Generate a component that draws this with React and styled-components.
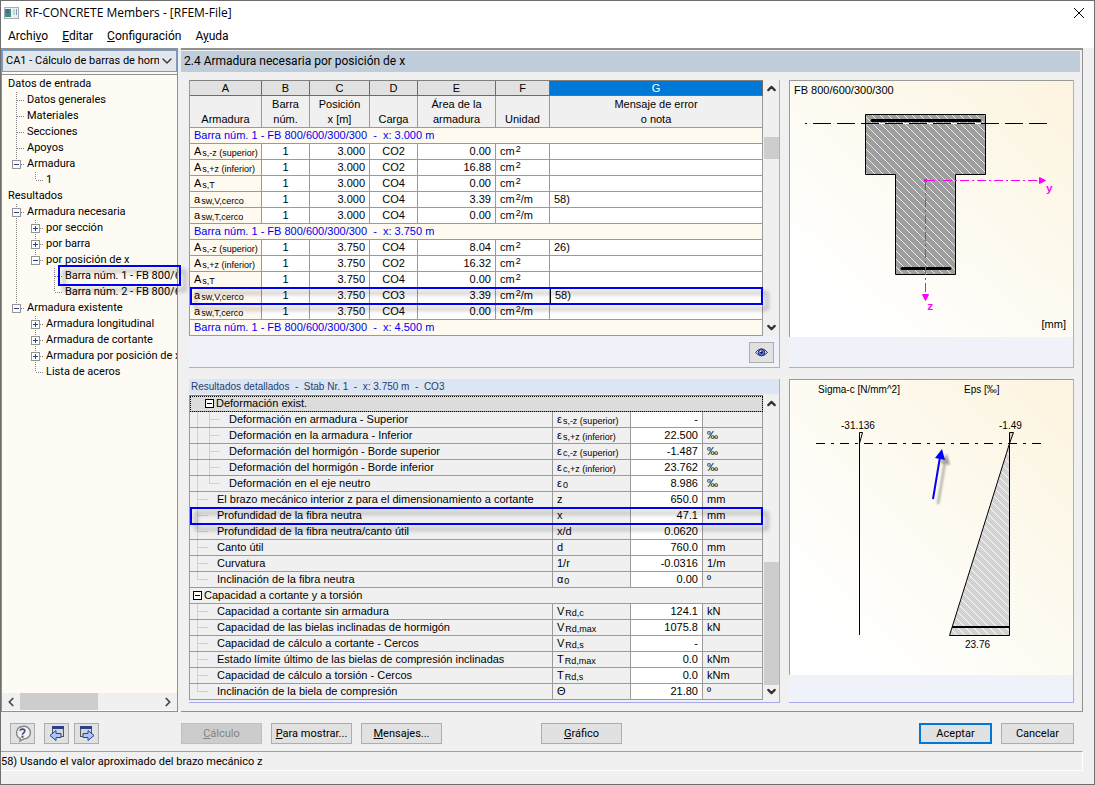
import React, { useState } from "react";
import styled, { createGlobalStyle, css } from "styled-components";
import { ChevronDown, ChevronLeft, ChevronRight, ChevronUp } from "lucide-react";

const GlobalStyle = createGlobalStyle`
  * {
    box-sizing: border-box;
  }

  body {
    margin: 0;
    background: #f0f0f0;
    color: #000;
    font-family: Roboto, "Liberation Sans", sans-serif;
    font-size: 11px;
    line-height: 16px;
  }

  button, select {
    font: inherit;
    color: inherit;
    padding: 0;
  }
`;

const Window = styled.div`
  min-height: 100vh;
  display: flex;
  flex-direction: column;
  background: #f0f0f0;
  border: 1px solid #6e6e6e;
`;

const TitleBar = styled.header`
  display: flex;
  align-items: center;
  gap: 6px;
  height: 24px;
  padding: 0 8px 0 3px;
  background: #fff;
`;

const Title = styled.h1`
  flex: 1;
  margin: 0;
  font-family: "Open Sans", sans-serif;
  font-size: 12px;
  font-weight: 400;
`;

const CloseButton = styled.button`
  display: flex;
  border: none;
  background: none;
`;

const MenuBar = styled.nav`
  display: flex;
  gap: 14px;
  height: 23px;
  padding: 0 7px;
  background: #fff;
  font-size: 12px;
  line-height: 22px;
`;

const MenuLink = styled.a`
  color: #000;
  text-decoration: none;
`;

const Main = styled.main`
  flex: 1;
  display: grid;
  grid-template-columns: 177px minmax(0, 1fr);
  gap: 3px;
  padding-right: 11px;
`;

// Navegador
const Sidebar = styled.aside`
  position: relative;
  z-index: 1;
  display: flex;
  flex-direction: column;
  min-width: 0;
  border: solid #909090;
  border-width: 2px 1px 1px 1px;
  background: #fdfbf3;
`;

const CaseSelect = styled.div`
  display: flex;
  align-items: center;
  height: 22px;
  padding: 0 1px 0 3px;
  border: 1px solid #7a9cc0;
  background: #e3e7ec;

  select {
    flex: 1;
    min-width: 0;
    appearance: none;
    border: none;
    background: none;
    outline: none;
    text-overflow: clip;
  }
`;

const Tree = styled.ul`
  flex: 1;
  list-style: none;
  margin: 2px 0 0;
  padding: 1px 0 0 6px;
  border-top: 1px solid #909090;
`;

const TreeRow = styled.li`
  position: relative;
  display: flex;
  height: 16px;
  white-space: nowrap;
`;

const TreeLabel = styled.a`
  flex: 1;
  min-width: 0;
  overflow: hidden;
  color: #000;
  text-decoration: none;
`;

const HScroll = styled.div`
  display: flex;
  align-items: center;
  justify-content: space-between;
  height: 17px;
  margin-bottom: 1px;
  padding: 0 2px;
  background: #f0f0f0;
`;

const HTrack = styled.div`
  flex: 1;
  height: 100%;
  margin: 0 2px;
`;

const HThumb = styled.div`
  width: 56%;
  height: 100%;
  background: #cdcdcd;
`;

const Mark = styled.div`
  position: absolute;
  inset: ${(p) => p.$inset};
  border: 2px solid #0000f0;
  filter: drop-shadow(5px 5px 2px rgba(0, 0, 0, 0.35));
  pointer-events: none;
`;

// Zona derecha
const Content = styled.section`
  min-width: 0;
  border: solid #909090;
  border-width: 2px 1px 1px 0;
`;

const ContentTitle = styled.h2`
  height: 21px;
  margin: 1px 2px 8px 0;
  padding: 0 3px;
  background: #bfcddb;
  font-size: 12px;
  font-weight: 400;
  line-height: 21px;
`;

const Panels = styled.div`
  display: grid;
  grid-template-columns: minmax(0, 1fr) 285px;
  column-gap: 9px;
  row-gap: 11px;
  padding: 0 8px 8px;
`;

const Panel = styled.div`
  display: flex;
  flex-direction: column;
  min-width: 0;
  border: solid #a9a9ee;
  border-width: 0 1px 1px 0;
`;

const PanelTitle = styled.h3`
  height: 15px;
  margin: 0 0 1px;
  padding: 0 2px;
  background: #dbe5f3;
  color: #1f3f6b;
  font-family: "Liberation Sans", sans-serif;
  font-size: 10px;
  font-weight: 400;
  line-height: 15px;
  white-space: pre;
`;

const PanelFooter = styled.div`
  flex: 1;
  display: flex;
  align-items: center;
  justify-content: flex-end;
  min-height: ${(p) => p.$height}px;
  padding: 2px 5px 0;
  background: #eff3f9;
`;

const TableArea = styled.div`
  display: flex;
`;

const VScroll = styled.div`
  display: flex;
  flex-direction: column;
  align-items: center;
  justify-content: space-between;
  width: 16px;
  padding: 2px 0 2px 1px;
  background: #f0f0f0;
`;

const VTrack = styled.div`
  flex: 1;
  display: flex;
  flex-direction: column;
  justify-content: ${(p) => (p.$atEnd ? "flex-end" : "flex-start")};
  width: 100%;
  padding-top: ${(p) => p.$offset || 0}px;
`;

const VThumb = styled.div`
  width: 100%;
  height: ${(p) => p.$size}px;
  background: #cdcdcd;
`;

const Table = styled.table`
  flex: 1;
  width: 100%;
  min-width: 0;
  table-layout: fixed;
  border-collapse: separate;
  border-spacing: 0;
  border-left: 1px solid #9a9a9a;
  border-top: 1px solid #808080;
  font-family: "Liberation Sans", sans-serif;
`;

const cell = css`
  height: 16px;
  padding: 0 4px;
  border: solid #9a9a9a;
  border-width: 0 1px 1px 0;
  line-height: 15px;
  font-weight: 400;
  white-space: nowrap;
  overflow: hidden;
`;

const Letter = styled.th`
  ${cell}
  height: 15px;
  border-color: #6b6b6b;
  background: ${(p) => (p.$active ? "#0078d7" : "#e1e1e1")};
  color: ${(p) => (p.$active ? "#fff" : "#000")};
  line-height: 14px;
`;

const Heading = styled.th`
  ${cell}
  height: 32px;
  background: #f0f0f0;
  vertical-align: bottom;
`;

const Cell = styled.td`
  ${cell}
  text-align: ${(p) => p.$align || "left"};
  background: ${(p) => p.$bg || "#fff"};
  ${(p) => p.$current && "border-left: 1px solid #000;"}
`;

const GroupCell = styled.td`
  ${cell}
  background: #fffaf0;
  color: #0000f0;
  white-space: pre;
`;

const MarkedRow = styled.tr`
  position: relative;
`;

const SectionCell = styled.td`
  ${cell}
  padding: 0 0 0 ${(p) => (p.$focused ? 14 : 2)}px;
  background: ${(p) => (p.$focused ? "#dcdcdc" : "#f0f0f0")};
  ${(p) =>
    p.$focused &&
    css`
      outline: 1px dotted #000;
      outline-offset: -1px;
    `}
`;

const DetailLabel = styled.div`
  display: flex;
  height: 15px;
`;

const LabelText = styled.span`
  margin-left: 11px;
`;

const Sub = styled.sub`
  margin-left: 1px;
  font-size: 9px;
  line-height: 9px;
  vertical-align: -1px;
`;

const Sup = styled.sup`
  margin-left: 1px;
  font-size: 9px;
  line-height: 9px;
  vertical-align: 3px;
`;

const Canvas = styled.div`
  display: flex;
  border: solid #9a9a9a;
  border-width: 1px 0 0 1px;
  background: linear-gradient(to top right, #fff 15%, #fdfaf0 55%, #fcf4df);
`;

const BlueArrow = styled.g`
  filter: drop-shadow(5px 5px 1px rgba(0, 0, 0, 0.35));
`;

// Barra inferior
const ButtonBar = styled.div`
  display: flex;
  align-items: center;
  gap: 9px;
  height: 39px;
  padding: 4px 20px 0 9px;
`;

const ToolButton = styled.button`
  display: flex;
  align-items: center;
  justify-content: center;
  width: 25px;
  height: 21px;
  border: 1px solid #adadad;
  background: #e1e1e1;
`;

const ToolPair = styled.div`
  display: flex;
  gap: 5px;
`;

const TextButton = styled.button`
  width: ${(p) => p.$width || 81}px;
  height: 21px;
  border: ${(p) => (p.$primary ? "2px solid #0078d7" : "1px solid #adadad")};
  background: #e1e1e1;

  &:disabled {
    border-color: #bfbfbf;
    background: #cccccc;
    color: #838383;
  }
`;

const Group = styled.div`
  display: flex;
  gap: 9px;
  margin-left: ${(p) => p.$left || 0}px;
`;

const Spacer = styled.div`
  flex: 1;
`;

const StatusBar = styled.footer`
  height: 20px;
  margin: 0 11px 13px 0;
  border: solid #fff;
  border-width: 1px 1px 1px 0;
  border-top-color: #a0a0a0;
  line-height: 19px;
`;

const treeItems = [
  { label: "Datos de entrada", guides: "" },
  { label: "Datos generales", guides: "t" },
  { label: "Materiales", guides: "t" },
  { label: "Secciones", guides: "t" },
  { label: "Apoyos", guides: "t" },
  { label: "Armadura", guides: "M" },
  { label: "1", guides: " e" },
  { label: "Resultados", guides: "" },
  { label: "Armadura necesaria", guides: "m" },
  { label: "por sección", guides: "|p" },
  { label: "por barra", guides: "|p" },
  { label: "por posición de x", guides: "|M" },
  { label: "Barra núm. 1 - FB 800/600/300/300", guides: "| t", marked: true },
  { label: "Barra núm. 2 - FB 800/600/300/300", guides: "| e" },
  { label: "Armadura existente", guides: "M" },
  { label: "Armadura longitudinal", guides: " p" },
  { label: "Armadura de cortante", guides: " p" },
  { label: "Armadura por posición de x", guides: " p" },
  { label: "Lista de aceros", guides: " e" },
];

const columns = [
  { letter: "A", title: "Armadura", width: 72 },
  { letter: "B", title: "Barra\nnúm.", width: 48 },
  { letter: "C", title: "Posición\nx [m]", width: 60 },
  { letter: "D", title: "Carga", width: 48 },
  { letter: "E", title: "Área de la\narmadura", width: 78 },
  { letter: "F", title: "Unidad", width: 54 },
  { letter: "G", title: "Mensaje de error\no nota" },
];

const rows = [
  { group: "Barra núm. 1 - FB 800/600/300/300  -  x: 3.000 m" },
  { sym: "A", sub: "s,-z (superior)", x: "3.000", co: "CO2", area: "0.00" },
  { sym: "A", sub: "s,+z (inferior)", x: "3.000", co: "CO2", area: "16.88" },
  { sym: "A", sub: "s,T", x: "3.000", co: "CO4", area: "0.00" },
  { sym: "a", sub: "sw,V,cerco", x: "3.000", co: "CO4", area: "3.39", perM: true, note: "58)" },
  { sym: "a", sub: "sw,T,cerco", x: "3.000", co: "CO4", area: "0.00", perM: true },
  { group: "Barra núm. 1 - FB 800/600/300/300  -  x: 3.750 m" },
  { sym: "A", sub: "s,-z (superior)", x: "3.750", co: "CO4", area: "8.04", note: "26)" },
  { sym: "A", sub: "s,+z (inferior)", x: "3.750", co: "CO2", area: "16.32" },
  { sym: "A", sub: "s,T", x: "3.750", co: "CO4", area: "0.00" },
  { sym: "a", sub: "sw,V,cerco", x: "3.750", co: "CO3", area: "3.39", perM: true, note: "58)", marked: true },
  { sym: "a", sub: "sw,T,cerco", x: "3.750", co: "CO4", area: "0.00", perM: true },
  { group: "Barra núm. 1 - FB 800/600/300/300  -  x: 4.500 m" },
];

const details = [
  { section: "Deformación exist.", focused: true },
  { label: "Deformación en armadura - Superior", guides: "|t", sym: "ε", sub: "s,-z (superior)", value: "-" },
  { label: "Deformación en la armadura - Inferior", guides: "|t", sym: "ε", sub: "s,+z (inferior)", value: "22.500", unit: "‰" },
  { label: "Deformación del hormigón - Borde superior", guides: "|t", sym: "ε", sub: "c,-z (superior)", value: "-1.487", unit: "‰" },
  { label: "Deformación del hormigón - Borde inferior", guides: "|t", sym: "ε", sub: "c,+z (inferior)", value: "23.762", unit: "‰" },
  { label: "Deformación en el eje neutro", guides: "|e", sym: "ε", sub: "0", value: "8.986", unit: "‰" },
  { label: "El brazo mecánico interior z para el dimensionamiento a cortante", guides: "t", sym: "z", value: "650.0", unit: "mm" },
  { label: "Profundidad de la fibra neutra", guides: "t", sym: "x", value: "47.1", unit: "mm", marked: true },
  { label: "Profundidad de la fibra neutra/canto útil", guides: "t", sym: "x/d", value: "0.0620" },
  { label: "Canto útil", guides: "t", sym: "d", value: "760.0", unit: "mm" },
  { label: "Curvatura", guides: "t", sym: "1/r", value: "-0.0316", unit: "1/m" },
  { label: "Inclinación de la fibra neutra", guides: "e", sym: "α", sub: "0", value: "0.00", unit: "º" },
  { section: "Capacidad a cortante y a torsión" },
  { label: "Capacidad a cortante sin armadura", guides: "t", sym: "V", sub: "Rd,c", value: "124.1", unit: "kN" },
  { label: "Capacidad de las bielas inclinadas de hormigón", guides: "t", sym: "V", sub: "Rd,max", value: "1075.8", unit: "kN" },
  { label: "Capacidad de cálculo a cortante - Cercos", guides: "t", sym: "V", sub: "Rd,s", value: "-" },
  { label: "Estado límite último de las bielas de compresión inclinadas", guides: "t", sym: "T", sub: "Rd,max", value: "0.0", unit: "kNm" },
  { label: "Capacidad de cálculo a torsión - Cercos", guides: "t", sym: "T", sub: "Rd,s", value: "0.0", unit: "kNm" },
  { label: "Inclinación de la biela de compresión", guides: "e", sym: "Θ", value: "21.80", unit: "º" },
];

// t: rama, e: última rama, |: línea continua, p/m/M: nodo plegado, abierto, abierto y último
function Guide({ kind }) {
  const box = "pmM".includes(kind);
  const up = "t|pmMe".includes(kind);
  const down = "t|pm".includes(kind);
  return (
    <svg width="19" height="16" aria-hidden="true" shapeRendering="crispEdges">
      <g stroke="#808080" strokeDasharray="1 1">
        {up && <path d="M8.5 0V8" />}
        {down && <path d="M8.5 8V16" />}
        {kind !== "|" && kind !== " " && <path d="M9 8.5H17" />}
      </g>
      {box && (
        <g fill="#fff" stroke="#949494">
          <rect x="4.5" y="4.5" width="8" height="8" />
          <path d={kind === "p" ? "M6 8.5H11M8.5 6V11" : "M6 8.5H11"} stroke="#2b3f8f" />
        </g>
      )}
    </svg>
  );
}

function DetailGuide({ kind }) {
  return (
    <svg width="12" height="16" aria-hidden="true" shapeRendering="crispEdges" stroke="#d0d0d0" overflow="visible">
      <path d={kind === "e" ? "M3.5 0V8" : "M3.5 0V16"} />
      {kind !== "|" && <path d="M3.5 7.5H14" />}
    </svg>
  );
}

function Minus() {
  return (
    <svg width="12" height="15" aria-hidden="true" shapeRendering="crispEdges" fill="#fff" stroke="#000">
      <rect x="1.5" y="3.5" width="8" height="8" />
      <path d="M3 7.5H8" />
    </svg>
  );
}

function AppIcon() {
  return (
    <svg width="15" height="14" aria-hidden="true" shapeRendering="crispEdges">
      <rect x="0.5" y="1.5" width="14" height="11" fill="#eef1f2" stroke="#a8aeb4" />
      <rect x="1" y="3" width="6" height="8" fill="#3f8f7c" />
      <rect x="2" y="3" width="3" height="4" fill="#3c6f9c" />
      <rect x="9" y="3" width="2" height="6" fill="#b9dccf" />
      <rect x="12" y="3" width="1" height="6" fill="#7f9db9" />
    </svg>
  );
}

function EyeIcon() {
  return (
    <svg width="13" height="11" viewBox="0 0 13 11" aria-hidden="true">
      <path d="M0.5 5.5Q6.5 -2 12.5 5.5Q6.5 12 0.5 5.5Z" fill="#e8ecf8" stroke="#333" />
      <circle cx="6.5" cy="5.5" r="3.3" fill="#5b7ae6" stroke="#1c2c86" />
      <circle cx="6.5" cy="5.5" r="1.3" fill="#101840" />
      <circle cx="5.5" cy="4.3" r="0.8" fill="#fff" />
    </svg>
  );
}

function HelpIcon() {
  return (
    <svg width="17" height="17" viewBox="0 0 17 17" aria-hidden="true">
      <path
        d="M8.5 1.5A6.3 6.3 0 1 1 10 13.9L6 16L6.5 13.6A6.3 6.3 0 0 1 8.5 1.5Z"
        fill="#f2f2f2"
        stroke="#858585"
        strokeWidth="1.4"
      />
      <path d="M6.2 5.8C6.2 3.6 10.8 3.4 10.8 6C10.8 7.8 8.5 7.8 8.3 9.7" fill="none" stroke="#3b4a80" strokeWidth="1.6" />
      <rect x="7.5" y="10.7" width="2" height="2" fill="#3b4a80" />
    </svg>
  );
}

function PageIcon({ next }) {
  return (
    <svg width="18" height="17" viewBox="0 0 18 17" aria-hidden="true">
      <rect x={next ? 2.5 : 4.5} y="1.5" width="11" height="10" fill="#d4d6dc" stroke="#555" />
      <rect x={next ? 2 : 4} y="1" width="12" height="3" fill="#2e3f8c" />
      <path
        d={next ? "M5 8.5H10V5.5L16 10.5L10 15.5V12.5H5Z" : "M13 8.5H8V5.5L2 10.5L8 15.5V12.5H13Z"}
        fill="#a9c8f5"
        stroke="#2443a5"
      />
    </svg>
  );
}

function Hatch({ id, bg, line }) {
  return (
    <pattern id={id} width="8" height="8" patternUnits="userSpaceOnUse">
      <rect width="8" height="8" fill={bg} />
      <path d="M-1 -1L9 9M-1 7L1 9M7 -1L9 1" stroke={line} />
    </pattern>
  );
}

function SectionDrawing() {
  return (
    <svg width="283" height="256" fontFamily="Liberation Sans, sans-serif" fontSize="11">
      <defs>
        <Hatch id="concrete" bg="#9f9f9f" line="#e8e8e8" />
      </defs>
      <text x="4" y="13">FB 800/600/300/300</text>
      <path
        d="M75.5 33.5H195.5V93.5H165.5V193.5H105.5V93.5H75.5Z"
        fill="url(#concrete)"
        stroke="#000"
      />
      <path d="M76 42.5H195" stroke="#fff" />
      <path d="M15 42.5H17" stroke="#000" />
      <path d="M23 42.5H257" stroke="#000" strokeDasharray="18 6" />
      <path d="M82 39.5H190M112 187.5H160" stroke="#000" strokeWidth="3" strokeLinecap="round" />
      <g stroke="#f0f" fill="#f0f">
        <path d="M136 99.5H249M135.5 100V213" strokeDasharray="9 3 2 3" />
        <rect x="134.5" y="98.5" width="2" height="2" />
        <path d="M249.5 96.5V102.5L255.5 99.5ZM132.5 213.5H138.5L135.5 219.5Z" />
      </g>
      <g fill="#f0f" fontFamily="Liberation Mono, monospace" fontWeight="700">
        <text x="256" y="111">y</text>
        <text x="137" y="229">z</text>
      </g>
      <text x="276" y="247" textAnchor="end">[mm]</text>
    </svg>
  );
}

function StressDrawing() {
  return (
    <svg width="283" height="295" fontFamily="Liberation Sans, sans-serif" fontSize="10">
      <defs>
        <Hatch id="strain" bg="#d2d2d2" line="#fff" />
      </defs>
      <text x="28" y="13">Sigma-c [N/mm^2]</text>
      <text x="174" y="13">Eps [‰]</text>
      <text x="51" y="49">-31.136</text>
      <text x="209" y="49">-1.49</text>
      <text x="175" y="268">23.76</text>
      <g stroke="#000" fill="none">
        <path d="M26 63.5H253" strokeDasharray="9 6 3 6" />
        <path d="M69.5 255V52.5H72.5L69.5 63.5" />
        <path d="M219.5 63.5L159.5 255.5H219.5Z" fill="url(#strain)" />
        <path d="M219.5 63.5V52.5H223.5Z" fill="#d2d2d2" />
        <path d="M162 247H219" strokeWidth="2" />
      </g>
      <BlueArrow>
        <path d="M143 119L150 77" stroke="#0000f8" strokeWidth="2" />
        <path d="M152 69L145 78L155 80Z" fill="#0000f8" />
      </BlueArrow>
    </svg>
  );
}

function ResultsTable() {
  return (
    <Table>
      <colgroup>
        {columns.map((c) => (
          <col key={c.letter} width={c.width} />
        ))}
      </colgroup>
      <thead>
        <tr>
          {columns.map((c) => (
            <Letter key={c.letter} $active={c.letter === "G"}>{c.letter}</Letter>
          ))}
        </tr>
        <tr>
          {columns.map((c) => (
            <Heading key={c.letter}>
              {c.title.split("\n").map((line) => (
                <div key={line}>{line}</div>
              ))}
            </Heading>
          ))}
        </tr>
      </thead>
      <tbody>
        {rows.map((r, i) => {
          if (r.group) {
            return (
              <tr key={i}>
                <GroupCell colSpan={7}>{r.group}</GroupCell>
              </tr>
            );
          }
          const Row = r.marked ? MarkedRow : "tr";
          return (
            <Row key={i}>
              <Cell $bg="#fffaf0">
                {r.sym}
                <Sub>{r.sub}</Sub>
                {r.marked && <Mark $inset="-1px 0" />}
              </Cell>
              <Cell $align="center">1</Cell>
              <Cell $align="right">{r.x}</Cell>
              <Cell $align="center">{r.co}</Cell>
              <Cell $align="right">{r.area}</Cell>
              <Cell>
                cm<Sup>2</Sup>
                {r.perM && "/m"}
              </Cell>
              <Cell $current={r.marked}>{r.note}</Cell>
            </Row>
          );
        })}
      </tbody>
    </Table>
  );
}

function DetailsTable() {
  return (
    <Table>
      <colgroup>
        <col />
        <col width="78" />
        <col width="72" />
        <col width="60" />
      </colgroup>
      <tbody>
        {details.map((d, i) => {
          if (d.section) {
            return (
              <tr key={i}>
                <SectionCell colSpan={4} $focused={d.focused}>
                  <DetailLabel>
                    <Minus />
                    {d.section}
                  </DetailLabel>
                </SectionCell>
              </tr>
            );
          }
          const Row = d.marked ? MarkedRow : "tr";
          return (
            <Row key={i}>
              <Cell $bg="#f0f0f0">
                <DetailLabel>
                  {d.guides.split("").map((g, n) => (
                    <DetailGuide key={n} kind={g} />
                  ))}
                  <LabelText>{d.label}</LabelText>
                </DetailLabel>
                {d.marked && <Mark $inset="-1px 0" />}
              </Cell>
              <Cell $bg="#f0f0f0">
                {d.sym}
                {d.sub && <Sub>{d.sub}</Sub>}
              </Cell>
              <Cell $align="right">{d.value}</Cell>
              <Cell $bg="#f0f0f0">{d.unit}</Cell>
            </Row>
          );
        })}
      </tbody>
    </Table>
  );
}

function App() {
  const [loadCase, setLoadCase] = useState("CA1");

  return (
    <Window>
      <GlobalStyle />
      <TitleBar>
        <AppIcon />
        <Title>RF-CONCRETE Members - [RFEM-File]</Title>
        <CloseButton aria-label="Cerrar">
          <svg width="14" height="14" stroke="#000" aria-hidden="true">
            <path d="M2 2L12 12M12 2L2 12" />
          </svg>
        </CloseButton>
      </TitleBar>
      <MenuBar>
        <MenuLink href="#archivo">Archi<u>v</u>o</MenuLink>
        <MenuLink href="#editar"><u>E</u>ditar</MenuLink>
        <MenuLink href="#configuracion"><u>C</u>onfiguración</MenuLink>
        <MenuLink href="#ayuda">A<u>y</u>uda</MenuLink>
      </MenuBar>

      <Main>
        <Sidebar>
          <CaseSelect>
            <select aria-label="Caso" value={loadCase} onChange={(e) => setLoadCase(e.target.value)}>
              <option value="CA1">CA1 - Cálculo de barras de hormigón</option>
            </select>
            <ChevronDown size={16} color="#333" strokeWidth={2} />
          </CaseSelect>
          <Tree>
            {treeItems.map((item) => (
              <TreeRow key={item.label}>
                {item.guides.split("").map((g, n) => (
                  <Guide key={n} kind={g} />
                ))}
                <TreeLabel href="#">{item.label}</TreeLabel>
                {item.marked && <Mark $inset="-3px -4px -2px 50px" />}
              </TreeRow>
            ))}
          </Tree>
          <HScroll>
            <ChevronLeft size={14} color="#444" strokeWidth={3} />
            <HTrack>
              <HThumb />
            </HTrack>
            <ChevronRight size={14} color="#444" strokeWidth={3} />
          </HScroll>
        </Sidebar>

        <Content>
          <ContentTitle>2.4 Armadura necesaria por posición de x</ContentTitle>
          <Panels>
            <Panel>
              <TableArea>
                <ResultsTable />
                <VScroll>
                  <ChevronUp size={13} color="#333" strokeWidth={4} />
                  <VTrack $offset={42}>
                    <VThumb $size={22} />
                  </VTrack>
                  <ChevronDown size={13} color="#333" strokeWidth={4} />
                </VScroll>
              </TableArea>
              <PanelFooter $height={31}>
                <ToolButton aria-label="Ver">
                  <EyeIcon />
                </ToolButton>
              </PanelFooter>
            </Panel>

            <Panel>
              <Canvas>
                <SectionDrawing />
              </Canvas>
              <PanelFooter $height={30} />
            </Panel>

            <Panel>
              <PanelTitle>Resultados detallados  -  Stab Nr. 1  -  x: 3.750 m  -  CO3</PanelTitle>
              <TableArea>
                <DetailsTable />
                <VScroll>
                  <ChevronUp size={13} color="#333" strokeWidth={4} />
                  <VTrack $atEnd>
                    <VThumb $size={123} />
                  </VTrack>
                  <ChevronDown size={13} color="#333" strokeWidth={4} />
                </VScroll>
              </TableArea>
            </Panel>

            <Panel>
              <Canvas>
                <StressDrawing />
              </Canvas>
              <PanelFooter $height={27} />
            </Panel>
          </Panels>
        </Content>
      </Main>

      <ButtonBar>
        <ToolButton aria-label="Ayuda">
          <HelpIcon />
        </ToolButton>
        <ToolPair>
          <ToolButton aria-label="Anterior">
            <PageIcon />
          </ToolButton>
          <ToolButton aria-label="Siguiente">
            <PageIcon next />
          </ToolButton>
        </ToolPair>
        <Group $left={73}>
          <TextButton disabled><u>C</u>álculo</TextButton>
          <TextButton><u>P</u>ara mostrar...</TextButton>
          <TextButton><u>M</u>ensajes...</TextButton>
        </Group>
        <Group $left={90}>
          <TextButton><u>G</u>ráfico</TextButton>
        </Group>
        <Spacer />
        <Group>
          <TextButton $primary $width={73}>Aceptar</TextButton>
          <TextButton $width={73}>Cancelar</TextButton>
        </Group>
      </ButtonBar>
      <StatusBar>58) Usando el valor aproximado del brazo mecánico z</StatusBar>
    </Window>
  );
}

export default App;
